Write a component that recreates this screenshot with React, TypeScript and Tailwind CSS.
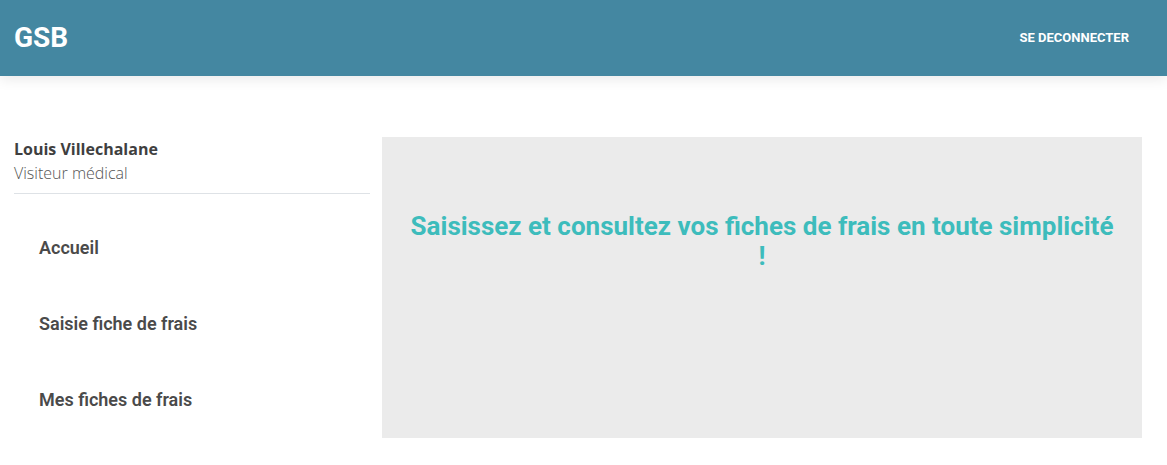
import React from "react";

const navItems = ["Accueil", "Saisie fiche de frais", "Mes fiches de frais"];

const App: React.FC = () => {
  return (
    <div className="min-h-[465px] bg-white font-['Roboto',sans-serif]">
      <header className="h-[76px] bg-[#4487a1] flex items-center justify-between pl-[14px] pr-[38px] shadow-[0_4px_12px_rgba(0,0,0,0.08)]">
        <span className="text-white text-[28px] font-bold">GSB</span>
        <button className="text-white text-[13px] font-bold">SE DECONNECTER</button>
      </header>

      <div className="flex pl-[14px] pr-[25px] gap-[12px] mt-[61px]">
        <aside className="w-[356px] shrink-0">
          <div className="font-['Open_Sans',sans-serif] pb-[8px] border-b border-[#dee2e6]">
            <div className="text-[16px] leading-[24px] font-bold text-[#3f3f3f]">
              Louis Villechalane
            </div>
            <div className="text-[16px] leading-[24px] font-light text-[#555]">
              Visiteur médical
            </div>
          </div>
          <nav className="mt-[15px]">
            {navItems.map((item) => (
              <div
                key={item}
                className="h-[76px] flex items-center pl-[25px] text-[18px] font-semibold text-[#4a4a4a]"
              >
                {item}
              </div>
            ))}
          </nav>
        </aside>

        <main className="flex-1 h-[301px] bg-[#ebebeb] px-[24px] pt-[74px]">
          <h1 className="text-center text-[26px] leading-[30px] font-bold text-[#3dbcbc]">
            Saisissez et consultez vos fiches de frais en toute simplicité !
          </h1>
        </main>
      </div>
    </div>
  );
};

export default App;
